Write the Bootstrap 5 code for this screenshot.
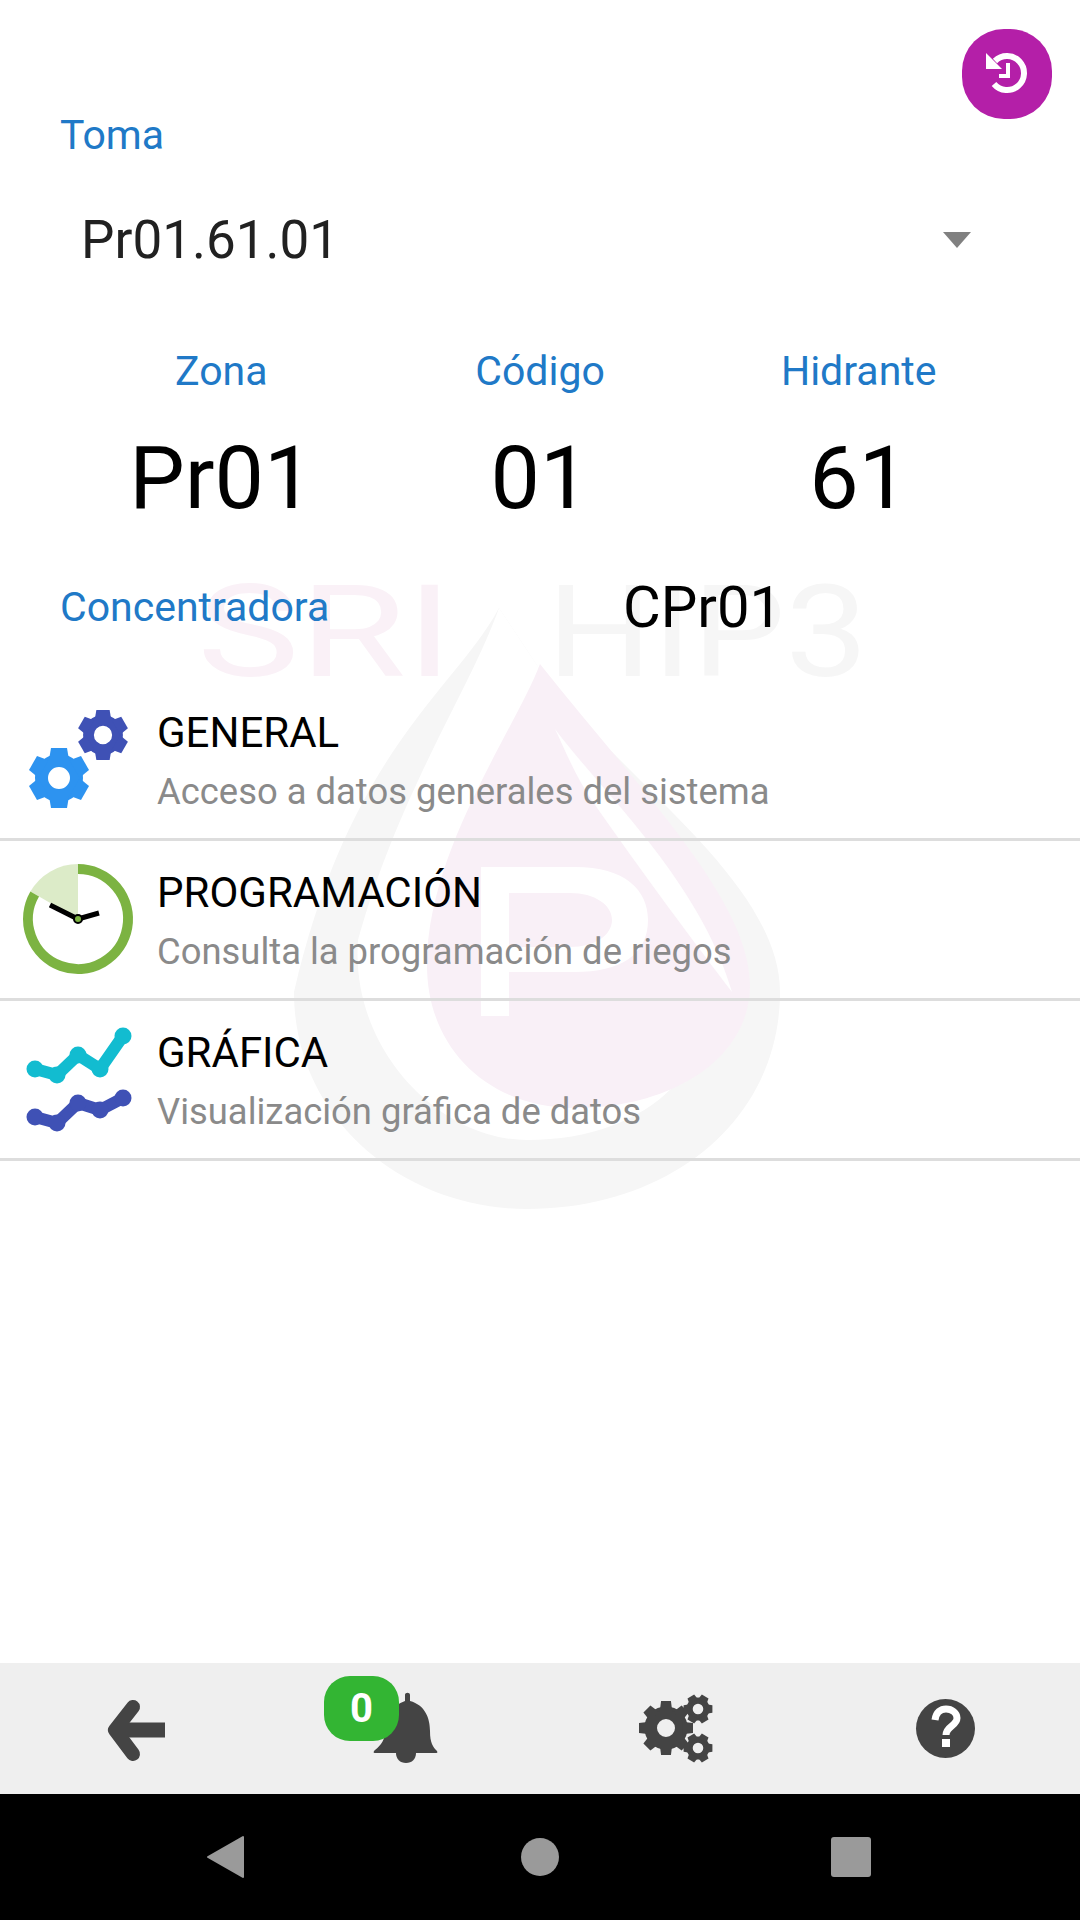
<!DOCTYPE html>
<html lang="es">

<head>
    <meta charset="UTF-8">
    <title>Toma</title>
    <link href="https://cdn.jsdelivr.net/npm/bootstrap@5.3.0/dist/css/bootstrap.min.css" rel="stylesheet">
    <style>
        body {
            background-color: #fff;
            font-family: Roboto, "Liberation Sans", sans-serif;
        }

        .screen {
            position: relative;
            width: 1080px;
            height: 1920px;
            overflow: hidden;
        }

        .watermark {
            position: absolute;
            left: 0;
            top: 0;
        }

        .content-area {
            position: relative;
            padding-top: 112px;
        }

        .fab-history {
            position: absolute;
            left: 962px;
            top: 29px;
            width: 90px;
            height: 90px;
            background: #b41fa8;
            border-radius: 42px;
        }

        .blue-label {
            color: #2079c7;
            font-size: 41px;
            line-height: 46px;
        }

        .toma-row {
            margin-left: 60px;
        }

        .select-row {
            margin-top: 52px;
            padding: 0 109px 0 81px;
            height: 60px;
            font-size: 53px;
            line-height: 60px;
            color: #212121;
        }

        .caret-down {
            width: 0;
            height: 0;
            border-left: 14px solid transparent;
            border-right: 14px solid transparent;
            border-top: 16px solid #808080;
        }

        .head-row {
            margin-top: 78px;
            padding: 0 62px;
        }

        .head-row>div,
        .val-row>div {
            width: 319px;
        }

        .val-row {
            margin-top: 34px;
            padding: 0 62px;
            font-size: 88px;
            line-height: 100px;
            color: #000;
        }

        .conc-row {
            margin-top: 49px;
            padding-left: 60px;
            height: 60px;
            line-height: 60px;
        }

        .conc-row .blue-label {
            line-height: 60px;
            width: 563px;
            flex: none;
        }

        .conc-val {
            font-size: 58px;
            color: #000;
        }

        .menu-list {
            margin-top: 44px;
        }

        .menu-row {
            height: 160px;
            padding: 0;
            background: transparent;
            border-bottom: 3px solid #ddd !important;
        }

        .menu-icon {
            width: 157px;
            height: 157px;
            flex: none;
        }

        .menu-title {
            padding-top: 28px;
            font-size: 42px;
            line-height: 48px;
            color: #000;
        }

        .menu-sub {
            margin-top: 13px;
            font-size: 36.4px;
            line-height: 44px;
            color: #8a8a8a;
        }

        .bottom-bar {
            position: absolute;
            left: 0;
            right: 0;
            top: 1663px;
            height: 131px;
            background: #efefef;
        }

        .bottom-cell {
            width: 270px;
            height: 131px;
            position: relative;
        }

        .alert-badge {
            position: absolute;
            left: 54px;
            top: 13px;
            width: 75px;
            height: 65px;
            border-radius: 26px;
            background: #33b533;
            color: #fff;
            font-size: 40px;
            font-weight: 700;
            line-height: 65px;
            text-align: center;
        }

        .sys-nav {
            position: absolute;
            left: 0;
            right: 0;
            top: 1794px;
            height: 126px;
            background: #000;
        }
    </style>
</head>

<body>
    <svg width="0" height="0" class="position-absolute">
        <defs>
            <g id="gear6">
                <circle r="17.5" fill="none" stroke="currentColor" stroke-width="13" />
                <g fill="currentColor">
                    <path id="tooth6" d="M-8 -30 H8 L10 -18 H-10 Z" />
                    <use href="#tooth6" transform="rotate(60)" />
                    <use href="#tooth6" transform="rotate(120)" />
                    <use href="#tooth6" transform="rotate(180)" />
                    <use href="#tooth6" transform="rotate(240)" />
                    <use href="#tooth6" transform="rotate(300)" />
                </g>
            </g>
            <g id="gear8">
                <circle r="17" fill="none" stroke="currentColor" stroke-width="14" />
                <g fill="currentColor">
                    <path id="tooth8" d="M-5.5 -30 H5.5 L7 -18 H-7 Z" />
                    <use href="#tooth8" transform="rotate(45)" />
                    <use href="#tooth8" transform="rotate(90)" />
                    <use href="#tooth8" transform="rotate(135)" />
                    <use href="#tooth8" transform="rotate(180)" />
                    <use href="#tooth8" transform="rotate(225)" />
                    <use href="#tooth8" transform="rotate(270)" />
                    <use href="#tooth8" transform="rotate(315)" />
                </g>
            </g>
        </defs>
    </svg>

    <div class="screen">
        <!-- marca de agua -->
        <svg class="watermark" width="1080" height="1300" viewBox="0 0 1080 1300">
            <path fill="#f6f6f6" d="M499 608C455 690 350 750 294 992C294 1120 405 1209 527 1209C670 1209 780 1120 780 992C780 915 700 840 640 780L560 700Z" />
            <path fill="#fff" d="M499 608C470 690 400 790 358 940C350 1050 440 1140 527 1140C590 1140 640 1120 672 1088L560 700Z" />
            <path fill="#f9f0f7" d="M540 664C515 730 427 850 427 965C427 1050 490 1108 575 1108C670 1108 750 1060 750 985C750 900 640 790 540 664Z" />
            <path fill="#fff" d="M555 729C600 790 700 880 732 992C700 950 640 870 591 799C575 775 565 750 555 729Z" />
            <path fill="#fff" fill-rule="evenodd" d="M481 867H575C625 867 648 890 648 920C648 955 620 972 575 972H509V1016H481ZM509 893V947H570C595 947 612 935 612 920C612 905 595 893 570 893Z" />
            <text x="197" y="676" font-family="Roboto" font-size="128" fill="#faf1f7" textLength="256" lengthAdjust="spacingAndGlyphs">SRI</text>
            <text x="547" y="676" font-family="Roboto" font-size="128" fill="#f6f6f6" textLength="321" lengthAdjust="spacingAndGlyphs">HIP3</text>
        </svg>

        <div class="content-area">
            <div class="blue-label toma-row">Toma</div>

            <div class="select-row d-flex justify-content-between align-items-center">
                <span>Pr01.61.01</span>
                <span class="caret-down"></span>
            </div>

            <div class="head-row d-flex text-center blue-label">
                <div>Zona</div>
                <div>Código</div>
                <div>Hidrante</div>
            </div>

            <div class="val-row d-flex text-center">
                <div>Pr01</div>
                <div>01</div>
                <div>61</div>
            </div>

            <div class="conc-row d-flex">
                <div class="blue-label">Concentradora</div>
                <div class="conc-val">CPr01</div>
            </div>

            <div class="list-group list-group-flush menu-list">
                <div class="list-group-item menu-row d-flex">
                    <svg class="menu-icon" viewBox="0 0 157 157">
                        <use href="#gear6" x="59" y="97" color="#2d93f0" />
                        <use href="#gear6" transform="translate(103 54) scale(.83)" color="#3f51b5" />
                    </svg>
                    <div>
                        <div class="menu-title">GENERAL</div>
                        <div class="menu-sub">Acceso a datos generales del sistema</div>
                    </div>
                </div>
                <div class="list-group-item menu-row d-flex">
                    <svg class="menu-icon" viewBox="0 0 157 157">
                        <path fill="#dcebc8" d="M78 78V23A55 55 0 0 0 30.4 50.5Z" />
                        <path fill="none" stroke="#7cb342" stroke-width="10" d="M78 28A50 50 0 1 1 34.7 53" />
                        <path fill="none" stroke="#000" stroke-width="5" d="M50 64L78 78L99 72" />
                        <circle cx="78" cy="78" r="4" fill="#7cb342" stroke="#000" stroke-width="2" />
                    </svg>
                    <div>
                        <div class="menu-title">PROGRAMACIÓN</div>
                        <div class="menu-sub">Consulta la programación de riegos</div>
                    </div>
                </div>
                <div class="list-group-item menu-row d-flex">
                    <svg class="menu-icon" viewBox="0 0 157 157">
                        <polyline fill="none" stroke="#12bcd0" stroke-width="12" stroke-linejoin="round" points="35,68 57,74 78,54 100,68 123,35" />
                        <g fill="#12bcd0">
                            <circle cx="35" cy="68" r="8.5" />
                            <circle cx="57" cy="74" r="8.5" />
                            <circle cx="78" cy="54" r="8.5" />
                            <circle cx="100" cy="68" r="8.5" />
                            <circle cx="123" cy="35" r="8.5" />
                        </g>
                        <polyline fill="none" stroke="#3f51b5" stroke-width="12" stroke-linejoin="round" points="35,116 57,122 78,102 100,109 123,97" />
                        <g fill="#3f51b5">
                            <circle cx="35" cy="116" r="8.5" />
                            <circle cx="57" cy="122" r="8.5" />
                            <circle cx="78" cy="102" r="8.5" />
                            <circle cx="100" cy="109" r="8.5" />
                            <circle cx="123" cy="97" r="8.5" />
                        </g>
                    </svg>
                    <div>
                        <div class="menu-title">GRÁFICA</div>
                        <div class="menu-sub">Visualización gráfica de datos</div>
                    </div>
                </div>
            </div>
        </div>

        <button class="fab-history border-0 p-0 d-flex">
            <svg width="90" height="90" viewBox="0 0 90 90">
                <path fill="#fff" d="M24 24V40H40Z" />
                <path fill="none" stroke="#fff" stroke-width="6" d="M33 32A17 17 0 1 1 32 55" />
                <path fill="none" stroke="#fff" stroke-width="4" d="M46 34V47H37" />
            </svg>
        </button>

        <div class="bottom-bar d-flex">
            <div class="bottom-cell">
                <svg width="270" height="131" viewBox="0 0 270 131">
                    <path fill="none" stroke="#444" stroke-width="14" stroke-linecap="round" stroke-linejoin="round" d="M133 44L115 67L133 91" />
                    <path fill="none" stroke="#444" stroke-width="15" d="M116 67H165" />
                </svg>
            </div>
            <div class="bottom-cell">
                <svg width="270" height="131" viewBox="0 0 270 131">
                    <path fill="#444" d="M135 32C135 29 140 29 140 32V38C155 42 160 55 160 68C160 80 163 84 167 88C168 90 167 90 165 90H106C104 90 103 90 104 88C108 84 115 80 115 68C115 55 122 42 135 38Z" />
                    <path fill="#444" d="M126 90H146C146 96 142 100 136 100C130 100 126 96 126 90Z" />
                </svg>
                <div class="alert-badge">0</div>
            </div>
            <div class="bottom-cell">
                <svg width="270" height="131" viewBox="0 0 270 131">
                    <use href="#gear8" transform="translate(126 65) scale(.9)" color="#444" />
                    <use href="#gear6" transform="translate(158 46) rotate(90) scale(.48)" color="#444" />
                    <use href="#gear6" transform="translate(158 85) rotate(90) scale(.48)" color="#444" />
                </svg>
            </div>
            <div class="bottom-cell">
                <svg width="270" height="131" viewBox="0 0 270 131">
                    <circle cx="135.5" cy="65.5" r="29.5" fill="#444" />
                    <path fill="none" stroke="#fff" stroke-width="7" d="M125 57C126 49 131 46 136 46C142 46 147 50 147 55C147 63 136 63 136 72" />
                    <rect x="132" y="76" width="8" height="8" fill="#fff" />
                </svg>
            </div>
        </div>

        <div class="sys-nav">
            <svg width="1080" height="126" viewBox="0 0 1080 126">
                <path fill="#9a9a9a" stroke="#9a9a9a" stroke-width="2" stroke-linejoin="round" d="M243 43V83L208 63Z" />
                <circle cx="540" cy="63" r="19" fill="#9a9a9a" />
                <rect x="831" y="43" width="40" height="40" rx="3" fill="#9a9a9a" />
            </svg>
        </div>
    </div>

    <script src="https://cdn.jsdelivr.net/npm/bootstrap@5.3.0/dist/js/bootstrap.bundle.min.js"></script>
</body>

</html>
